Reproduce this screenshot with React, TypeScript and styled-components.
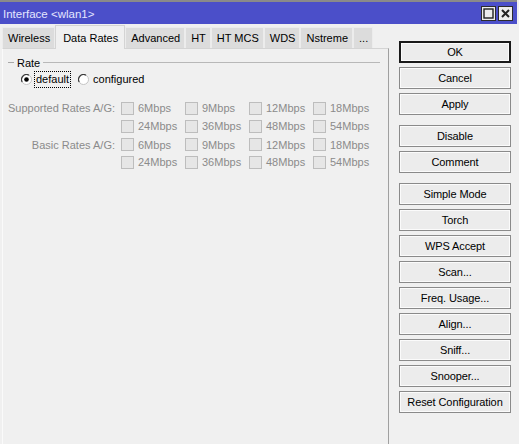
import styled, {createGlobalStyle} from 'styled-components';

const Global = createGlobalStyle`
  html, body {
    margin: 0;
    padding: 0;
    background: #f0f0f0;
  }

  body {
    font-family: "Liberation Sans", Arial, sans-serif;
    font-size: 11px;
    color: #000;
  }
`;

const Window = styled.div`
  width: 519px;
  height: 444px;
  background: #f0f0f0;
  display: flex;
  flex-direction: column;
  overflow: hidden;
`;

const TitleBar = styled.div`
  height: 22px;
  margin-right: 2px;
  border-top: 2px solid #8a8a8a;
  background: #4b4fc9;
  display: flex;
  align-items: center;
  padding: 0 3px;
  color: #e4e6ff;
  font-size: 11.5px;

  > span {
    margin-top: 1px;
  }
`;

const Controls = styled.div`
  margin-left: auto;
  display: flex;
  gap: 2px;
  margin-right: 1px;
`;

const ControlButton = styled.div`
  width: 13px;
  height: 13px;
  border: 1px solid #2b2b2b;
  background: #ececec;
  display: flex;
  align-items: center;
  justify-content: center;
`;

const Body = styled.div`
  flex: 1;
  display: flex;
`;

const Left = styled.div`
  width: 389px;
  flex: none;
  display: flex;
  flex-direction: column;
`;

const TabStrip = styled.div`
  height: 24px;
  display: flex;
  align-items: flex-end;
  padding-left: 2px;
`;

const Tab = styled.div<{ $active?: boolean }>`
  position: relative;
  flex: none;
  white-space: nowrap;
  height: ${p => (p.$active ? '24px' : '21px')};
  margin-bottom: ${p => (p.$active ? '-1px' : '0')};
  padding: ${p => (p.$active ? '0 6px 0 7px' : '0 4px 0 5px')};
  display: flex;
  align-items: center;
  box-sizing: border-box;
  background: ${p => (p.$active ? '#f0f0f0' : '#dcdcdc')};
  border: 1px solid ${p => (p.$active ? '#d4d4d4' : '#ececec')};
  border-bottom: none;
  z-index: ${p => (p.$active ? 1 : 0)};
`;

const Panel = styled.div`
  flex: 1;
  margin-left: 2px;
  border-top: 1px solid #d4d4d4;
  border-right: 1px solid #a0a0a0;
  border-left: 1px solid #fafafa;
  padding: 7px 8px 0 5px;
`;

const GroupHeader = styled.div`
  display: flex;
  align-items: center;
  height: 13px;
  gap: 3px;

  &::before {
    content: "";
    width: 6px;
    height: 1px;
    background: #a8a8a8;
  }

  &::after {
    content: "";
    flex: 1;
    height: 1px;
    background: #b8b8b8;
  }
`;

const RadioRow = styled.div`
  display: flex;
  align-items: center;
  height: 17px;
  margin-top: 2px;
  padding-left: 13px;
  gap: 7px;
`;

const RadioItem = styled.div`
  display: flex;
  align-items: center;
  gap: 2px;
`;

const RadioLabel = styled.span<{ $focused?: boolean }>`
  padding: 1px 2px 2px 2px;
  outline: ${p => (p.$focused ? '1px dotted #000' : 'none')};
  outline-offset: -1px;
  height: 17px;
  box-sizing: border-box;
  display: flex;
  align-items: center;
`;

const RatesGrid = styled.div`
  margin-top: 11px;
  margin-left: -5px;
  display: grid;
  grid-template-columns: 118px repeat(4, 64px);
  grid-auto-rows: 18px;
  color: #8b8b8b;
`;

const RateLabel = styled.div<{ $gap?: boolean }>`
  grid-column: 1;
  padding-right: 6px;
  display: flex;
  align-items: center;
  justify-content: flex-end;
  white-space: nowrap;
  margin-top: ${p => (p.$gap ? '1px' : '0')};
`;

const Check = styled.div<{ $gap?: boolean }>`
  display: flex;
  align-items: center;
  gap: 4px;
  margin-top: ${p => (p.$gap ? '1px' : '0')};

  &::before {
    content: "";
    width: 11px;
    height: 11px;
    border: 1px solid #bdbdbd;
    background: #e6e6e6;
    flex: none;
  }
`;

const Side = styled.div`
  flex: 1;
  padding: 17px 0 0 10px;
  display: flex;
  flex-direction: column;
`;

const ButtonGroup = styled.div`
  display: flex;
  flex-direction: column;
  gap: 4px;
  margin-bottom: 10px;
`;

const Button = styled.div<{ $default?: boolean }>`
  width: 112px;
  height: 22px;
  box-sizing: border-box;
  display: flex;
  align-items: center;
  justify-content: center;
  background: #ececec;
  border: ${p => (p.$default ? '2px solid #1a1a1a' : '1px solid #8a8a8a')};
  box-shadow: inset 0 0 0 1px #fbfbfb;
  letter-spacing: -0.1px;
`;

function Radio({checked}: { checked?: boolean }) {
  return (
    <svg width="11" height="11" viewBox="0 0 11 11">
      <circle cx="5.5" cy="5.5" r="5" fill="#fff" stroke="#c4c4c4"/>
      <path d="M1.2 8 A5 5 0 0 1 8 1.2" fill="none" stroke="#3c3c3c" strokeWidth="1.2"/>
      {checked && <circle cx="5.5" cy="5.5" r="2.3" fill="#000"/>}
    </svg>
  );
}

const rates = [
  ['6Mbps', '9Mbps', '12Mbps', '18Mbps'],
  ['24Mbps', '36Mbps', '48Mbps', '54Mbps'],
];

const groups = ['Supported Rates A/G:', 'Basic Rates A/G:'];

const buttonGroups = [
  ['OK', 'Cancel', 'Apply'],
  ['Disable', 'Comment'],
  ['Simple Mode', 'Torch', 'WPS Accept', 'Scan...', 'Freq. Usage...', 'Align...', 'Sniff...', 'Snooper...', 'Reset Configuration'],
];

const tabs = ['Wireless', 'Data Rates', 'Advanced', 'HT', 'HT MCS', 'WDS', 'Nstreme', '...'];

function App() {
  return (
    <Window>
      <Global/>
      <TitleBar>
        <span>Interface &lt;wlan1&gt;</span>
        <Controls>
          <ControlButton>
            <svg width="11" height="11" viewBox="0 0 11 11">
              <rect x="1" y="1" width="9" height="9" fill="none" stroke="#222" strokeWidth="1.4"/>
            </svg>
          </ControlButton>
          <ControlButton>
            <svg width="11" height="11" viewBox="0 0 11 11">
              <path d="M2 2 L9 9 M9 2 L2 9" stroke="#222" strokeWidth="2"/>
            </svg>
          </ControlButton>
        </Controls>
      </TitleBar>
      <Body>
        <Left>
          <TabStrip>
            {tabs.map(t => (
              <Tab key={t} $active={t === 'Data Rates'}>{t}</Tab>
            ))}
          </TabStrip>
          <Panel>
            <GroupHeader>Rate</GroupHeader>
            <RadioRow>
              <RadioItem>
                <Radio checked/>
                <RadioLabel $focused>default</RadioLabel>
              </RadioItem>
              <RadioItem>
                <Radio/>
                <RadioLabel>configured</RadioLabel>
              </RadioItem>
            </RadioRow>
            <RatesGrid>
              {groups.map((g, gi) => [
                <RateLabel key={g} $gap={gi > 0}>{g}</RateLabel>,
                ...rates[0].map(r => <Check key={g + r} $gap={gi > 0}>{r}</Check>),
                <div key={g + 'blank'}/>,
                ...rates[1].map(r => <Check key={g + r}>{r}</Check>),
              ])}
            </RatesGrid>
          </Panel>
        </Left>
        <Side>
          {buttonGroups.map((group, i) => (
            <ButtonGroup key={i}>
              {group.map(b => (
                <Button key={b} $default={b === 'OK'}>{b}</Button>
              ))}
            </ButtonGroup>
          ))}
        </Side>
      </Body>
    </Window>
  );
}

export default App;
